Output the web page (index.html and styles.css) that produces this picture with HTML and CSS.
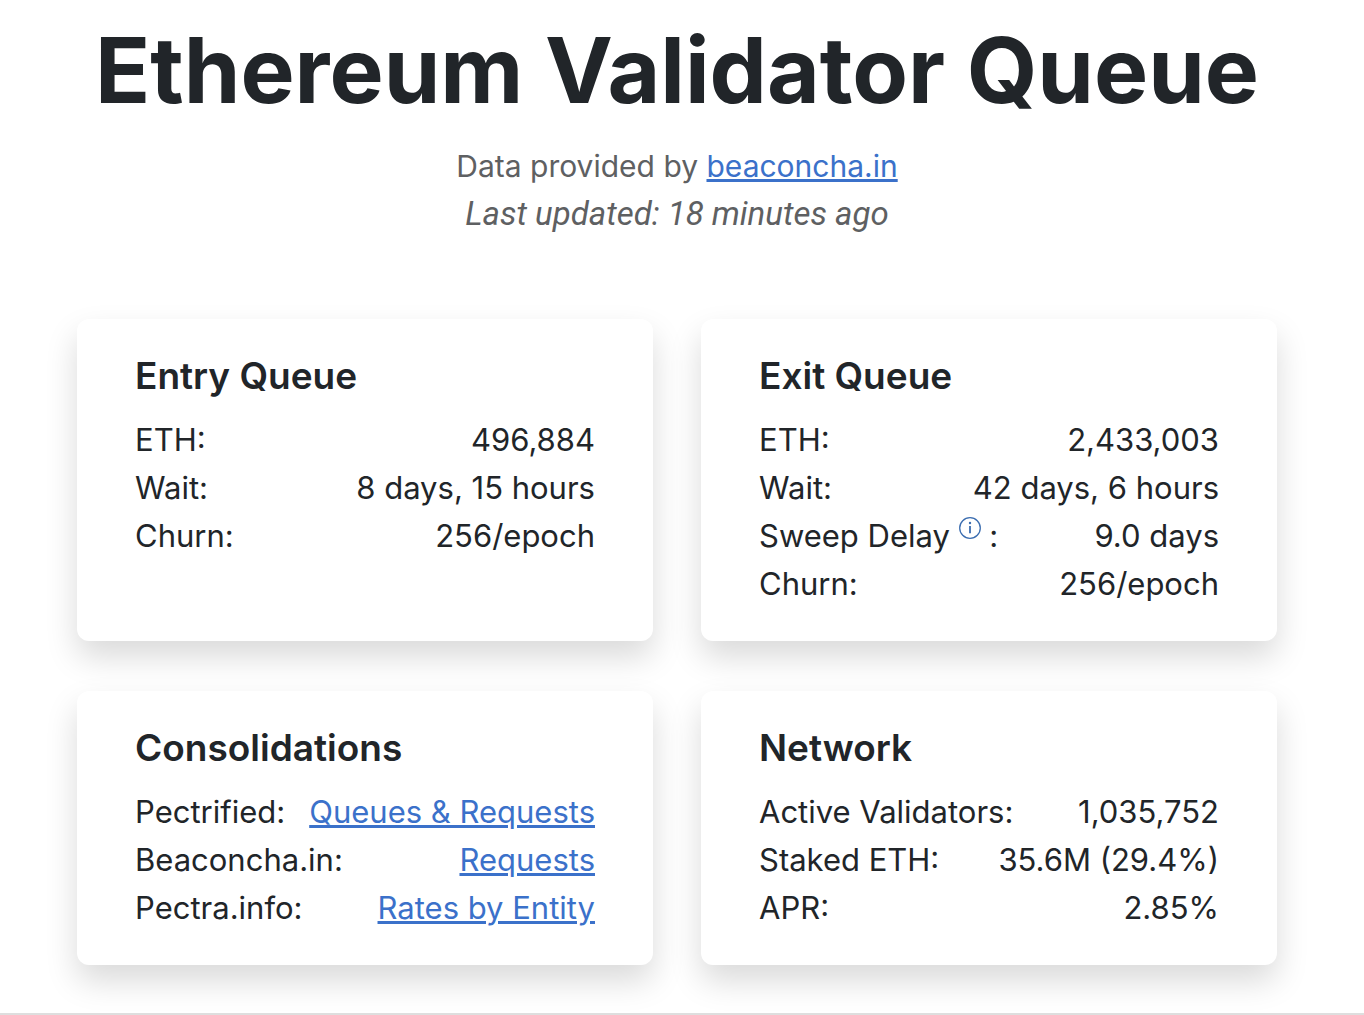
FILE: index.html
```html
<!DOCTYPE html>
<html lang="en">

<head>
    <meta charset="UTF-8">
    <meta name="viewport" content="width=device-width, initial-scale=1.0">
    <title>Ethereum Validator Queue</title>
    <link rel="stylesheet" href="styles.css">
</head>

<body>
    <header>
        <h1>Ethereum Validator Queue</h1>
        <p>Data provided by <a href="#">beaconcha.in</a></p>
        <p class="updated">Last updated: 18 minutes ago</p>
    </header>
    <main class="cards">
        <section class="card">
            <h2>Entry Queue</h2>
            <dl>
                <div class="row"><dt>ETH:</dt><dd>496,884</dd></div>
                <div class="row"><dt>Wait:</dt><dd>8 days, 15 hours</dd></div>
                <div class="row"><dt>Churn:</dt><dd>256/epoch</dd></div>
            </dl>
        </section>
        <section class="card">
            <h2>Exit Queue</h2>
            <dl>
                <div class="row"><dt>ETH:</dt><dd>2,433,003</dd></div>
                <div class="row"><dt>Wait:</dt><dd>42 days, 6 hours</dd></div>
                <div class="row">
                    <dt>Sweep Delay
                        <button type="button" class="info" aria-label="About the sweep delay">
                            <svg viewBox="0 0 22 22" width="22" height="22" fill="none" stroke="currentColor" aria-hidden="true">
                                <circle cx="11" cy="11" r="10.3" stroke-width="1.3" />
                                <path d="M11 9v7.200" stroke-width="1.8" />
                                <circle cx="11" cy="6" r="1.2" fill="currentColor" stroke="none" />
                            </svg>
                        </button> :</dt>
                    <dd>9.0 days</dd>
                </div>
                <div class="row"><dt>Churn:</dt><dd>256/epoch</dd></div>
            </dl>
        </section>
        <section class="card">
            <h2>Consolidations</h2>
            <dl>
                <div class="row"><dt>Pectrified:</dt><dd><a href="#">Queues &amp; Requests</a></dd></div>
                <div class="row"><dt>Beaconcha.in:</dt><dd><a href="#">Requests</a></dd></div>
                <div class="row"><dt>Pectra.info:</dt><dd><a href="#">Rates by Entity</a></dd></div>
            </dl>
        </section>
        <section class="card">
            <h2>Network</h2>
            <dl>
                <div class="row"><dt>Active Validators:</dt><dd>1,035,752</dd></div>
                <div class="row"><dt>Staked ETH:</dt><dd>35.6M (29.4%)</dd></div>
                <div class="row"><dt>APR:</dt><dd>2.85%</dd></div>
            </dl>
        </section>
    </main>
    <hr>
</body>

</html>
```

FILE: styles.css
```css
* {
    box-sizing: border-box;
}

body {
    margin: 0;
    font-family: Inter, 'Liberation Sans', sans-serif;
    font-size: 31px;
    line-height: 48px;
    color: #212529;
    background-color: #FFFFFF;
}

a {
    color: #3B71CA;
    text-decoration: underline;
    text-decoration-thickness: 3px;
}

/* Header */
header {
    padding: 12px 87px 0 77px;
    text-align: center;
    color: #5E6062;
}

header h1 {
    margin: 0 0 14px;
    font-size: 91px;
    font-weight: 700;
    line-height: 116px;
    color: #212529;
}

header p {
    margin: 0;
    font-size: 30px;
}

header .updated {
    font-family: Roboto, 'Liberation Sans', sans-serif;
    font-size: 33px;
    font-style: italic;
}

/* Cards */
.cards {
    display: grid;
    grid-template-columns: 1fr 1fr;
    gap: 50px 48px;
    padding: 81px 87px 48px 77px;
}

.card {
    padding: 33px 58px;
    border-radius: 12px;
    background-color: #FFFFFF;
    box-shadow: 0 16px 32px rgba(0, 0, 0, 0.15);
}

.card h2 {
    margin: 0 0 16px;
    font-size: 37px;
    font-weight: 600;
    line-height: 48px;
}

.card dl,
.card dd {
    margin: 0;
}

.row {
    display: flex;
    justify-content: space-between;
    white-space: nowrap;
}

/* Info icon sits raised beside its label */
.info {
    padding: 0;
    border: none;
    background: none;
    color: #3B6DB0;
    line-height: 0;
    vertical-align: 8px;
    cursor: pointer;
}

/* Bottom divider */
hr {
    margin: 0;
    border: none;
    border-top: 2px solid #DEDEDE;
}
```
